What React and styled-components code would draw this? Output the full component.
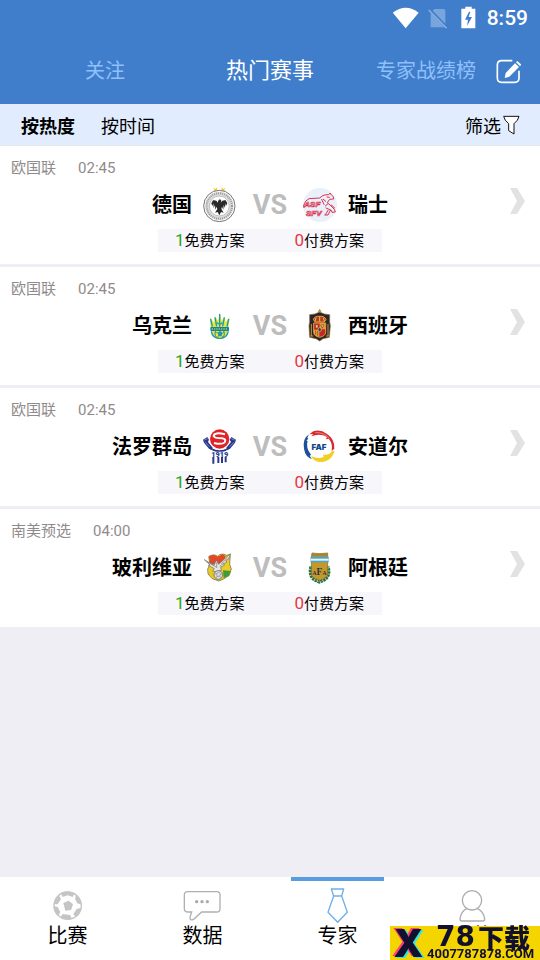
import React from "react";
import styled, { createGlobalStyle } from "styled-components";


const matches = [
  { league: "欧国联", time: "02:45", home: "德国", away: "瑞士", homeCrest: Germany, awayCrest: Switzerland, free: 1, paid: 0 },
  { league: "欧国联", time: "02:45", home: "乌克兰", away: "西班牙", homeCrest: Ukraine, awayCrest: Spain, free: 1, paid: 0 },
  { league: "欧国联", time: "02:45", home: "法罗群岛", away: "安道尔", homeCrest: Faroe, awayCrest: Andorra, free: 1, paid: 0 },
  { league: "南美预选", time: "04:00", home: "玻利维亚", away: "阿根廷", homeCrest: Bolivia, awayCrest: Argentina, free: 1, paid: 0 },
];

const tabs = [
  { label: "比赛", icon: BallIcon },
  { label: "数据", icon: ChatIcon },
  { label: "专家", icon: TieIcon, active: true },
  { label: "我的", icon: PersonIcon },
];


export default function App() {
  return (
    <Page>
      <GlobalStyle />

      <Header>
        <StatusBar>
          <StatusIcons />
          <Clock>8:59</Clock>
        </StatusBar>
        <TopTabs>
          <TopTab type="button">关注</TopTab>
          <TopTab type="button" $active>热门赛事</TopTab>
          <TopRight>
            <TopTab type="button">专家战绩榜</TopTab>
            <IconButton type="button" aria-label="发布">
              <EditIcon />
            </IconButton>
          </TopRight>
        </TopTabs>
      </Header>

      <SortBar>
        <SortButton type="button" $active>按热度</SortButton>
        <SortButton type="button">按时间</SortButton>
        <FilterButton type="button">
          筛选
          <FunnelIcon />
        </FilterButton>
      </SortBar>

      <MatchList>
        {matches.map((match) => (
          <MatchCard key={match.home} {...match} />
        ))}
      </MatchList>

      <TabBar>
        {tabs.map(({ label, icon: Icon, active }) => (
          <TabLink key={label} href="#" $active={active}>
            <Icon />
            {label}
          </TabLink>
        ))}
      </TabBar>

      <Watermark />
    </Page>
  );
}


function MatchCard(props) {
  const HomeCrest = props.homeCrest;
  const AwayCrest = props.awayCrest;

  return (
    <Card href="#">
      <Meta>
        <span>{props.league}</span>
        <span>{props.time}</span>
      </Meta>
      <Teams>
        <HomeName>{props.home}</HomeName>
        <HomeCrest />
        <Versus>VS</Versus>
        <AwayCrest />
        <AwaySide>
          <TeamName>{props.away}</TeamName>
          <Chevron viewBox="0 0 15 26" aria-hidden="true">
            <path d="M0 0H7L15 13L7 26H0L7 13Z" fill="#e2e2e2" />
          </Chevron>
        </AwaySide>
      </Teams>
      <Plans>
        <Plan><Count $color="#2aa515">{props.free}</Count>免费方案</Plan>
        <Plan><Count $color="#e5383b">{props.paid}</Count>付费方案</Plan>
      </Plans>
    </Card>
  );
}


function StatusIcons() {
  return (
    <svg width="84" height="24" viewBox="98 16 252 72" aria-hidden="true">
      <path d="M97 36Q136 6 175 36L136 83Z" fill="#fff" />
      <path d="M222 25H249Q255 25 255 31V80H211V37Z" fill="#79a5dd" />
      <path d="M206 25L262 83" stroke="#407ecb" strokeWidth="9" />
      <path d="M205 28L259 83" stroke="#8cb2e2" strokeWidth="4" />
      <path d="M315 18H334V24H345V83H303V24H315Z" fill="#fff" />
      <path d="M326 33L314 57H323L320 76L335 49H325L330 33Z" fill="#407ecb" />
    </svg>
  );
}

function EditIcon() {
  return (
    <svg width="25" height="25" viewBox="409 171 75 75" aria-hidden="true">
      <path d="M458 176H426Q413 176 413 189V228Q413 241 426 241H465Q478 241 478 228V206" fill="none" stroke="#fff" strokeWidth="5" />
      <path d="M435 228L438 213L466 184L478 195L449 224Z" fill="#fff" />
      <path d="M469 181L473 177L485 188L481 193Z" fill="#fff" />
    </svg>
  );
}

function FunnelIcon() {
  return (
    <svg width="17" height="20" viewBox="429 343 51 60" aria-hidden="true">
      <path d="M431 347H477Q475 359 462 369V400L446 390V369Q433 359 431 347Z" fill="#fff" stroke="#111" strokeWidth="3" strokeLinejoin="round" />
    </svg>
  );
}

function BallIcon() {
  return (
    <svg width="40" height="36" viewBox="142 54 120 108" aria-hidden="true">
      <circle cx="201" cy="107" r="41" fill="#fff" stroke="#c5c5c5" strokeWidth="4" />
      <g fill="#c5c5c5">
        <path d="M188 99L204 92L217 103L211 120L194 122Z" />
        <path d="M180 69Q201 60 222 70L216 81L201 76L186 81Z" />
        <path d="M226 74Q241 86 243 104L230 100L223 86Z" />
        <path d="M242 113Q238 133 225 142L218 132L228 117Z" />
        <path d="M214 146Q196 152 179 142L186 132L208 135Z" />
        <path d="M173 139Q159 126 159 108L171 111L179 126Z" />
        <path d="M160 103Q162 85 174 74L181 87L171 103Z" />
      </g>
    </svg>
  );
}

function ChatIcon() {
  return (
    <svg width="40" height="36" viewBox="548 54 120 108" aria-hidden="true">
      <path d="M563 65H649Q659 65 659 75V116Q659 126 649 126H604L580 148Q568 153 569 142L574 126H563Q552 126 552 116V75Q552 65 563 65Z" fill="none" stroke="#b0b0b4" strokeWidth="4" />
      <g fill="#aaaaae">
        <circle cx="589" cy="95" r="5" />
        <circle cx="605" cy="95" r="5" />
        <circle cx="621" cy="95" r="5" />
      </g>
    </svg>
  );
}

function TieIcon() {
  return (
    <svg width="40" height="36" viewBox="143 54 120 108" aria-hidden="true">
      <path d="M183 57H220L214 78H190ZM190 78L173 127L202 157L231 127L214 78" fill="none" stroke="#6fb0e8" strokeWidth="4" strokeLinejoin="round" />
    </svg>
  );
}

function PersonIcon() {
  return (
    <svg width="40" height="36" viewBox="548 54 120 108" aria-hidden="true">
      <circle cx="605" cy="91" r="29" fill="none" stroke="#acacb0" strokeWidth="4" />
      <path d="M589 116Q572 124 569 147Q569 153 575 153H637Q643 153 643 147Q640 124 621 116" fill="none" stroke="#acacb0" strokeWidth="4" />
    </svg>
  );
}


function Germany() {
  return (
    <Crest viewBox="36 21 108 108" aria-hidden="true">
      <g fill="#f5c927">
        <path d="M70 23L76 27L82 22L81 30L84 36L76 33L70 35L73 29Z" />
        <path d="M106 23L100 27L94 22L95 30L92 36L100 33L106 35L103 29Z" />
      </g>
      <circle cx="88" cy="78" r="47" fill="#fff" stroke="#777" strokeWidth="3" />
      <circle cx="88" cy="78" r="37" fill="none" stroke="#dcdcdc" strokeWidth="11" />
      <circle cx="88" cy="78" r="38" fill="none" stroke="#999" strokeWidth="6" strokeDasharray="3 3" />
      <circle cx="88" cy="78" r="30" fill="#fff" stroke="#999" strokeWidth="2" />
      <path d="M84 63L90 57L94 62L92 68Q97 59 107 61L112 70L108 78L106 70L105 84L101 75L100 89L96 80L94 87L101 98L93 96L88 106L83 96L75 98L82 87L80 80L76 89L75 75L71 84L70 70L67 78L64 70L69 61Q79 59 84 68Z" fill="#292929" />
    </Crest>
  );
}

function Switzerland() {
  return (
    <Crest viewBox="336 21 108 108" aria-hidden="true">
      <circle cx="390" cy="75" r="51" fill="#e9f0f8" />
      <g fill="none" stroke="#dc3150" strokeWidth="3" strokeLinecap="round" strokeLinejoin="round">
        <path d="M341 76Q346 60 357 56L389 54L398 47Q408 43 416 44L420 39L424 45L430 50L431 57L419 58L412 68Q424 78 433 88L436 96L426 97L424 91L408 84" />
        <path d="M414 71L406 78M400 58L407 64M424 75L434 84M414 91L407 103M421 91L414 105L404 105M341 76L342 83M411 51L418 52M395 58L402 73" />
      </g>
      <g fill="#e9f0f8" stroke="#dc3150" strokeWidth="2" fontFamily="Liberation Sans, sans-serif" fontSize="24" fontWeight="700" fontStyle="italic">
        <text x="343" y="80">ASF</text>
        <text x="348" y="107">SFV</text>
      </g>
    </Crest>
  );
}

function Ukraine() {
  return (
    <Crest viewBox="36 24 108 108" aria-hidden="true">
      <path d="M59 51L72 68L75 49L84 62L89 37L95 62L105 49L106 68L119 51L115 91Q115 117 89 117Q64 117 63 91Z" fill="#e6e62b" />
      <g fill="none" stroke="#159bc0" strokeWidth="4">
        <path d="M62 57L67 80M75 52L80 79M89 42V80M103 52L98 79M116 57L111 80M81 68Q89 77 97 68" />
        <path d="M64 94Q67 114 89 115Q111 114 115 94" />
      </g>
      <circle cx="89" cy="101" r="14" fill="#f0e93b" stroke="#2389a4" strokeWidth="3" />
      <path d="M84 98L90 94L97 99L94 107L86 108ZM76 98L84 98M97 99L103 96M86 108L82 113M94 107L99 112" fill="#1b96bd" stroke="#2389a4" strokeWidth="2" />
      <rect x="61" y="81" width="56" height="12" rx="2" fill="#1283b1" />
      <path d="M65 87H113" stroke="#a9c953" strokeWidth="4" strokeDasharray="4 3" />
    </Crest>
  );
}

function Spain() {
  return (
    <Crest viewBox="336 24 108 108" aria-hidden="true">
      <path d="M359 44Q375 44 389 36Q402 44 419 44V65L421 77L418 112L399 116L389 123L378 116L359 112L357 77L359 65Z" fill="#25252c" stroke="#8b6b35" strokeWidth="2" />
      <path d="M385 37L384 32L387 30L389 26L391 30L394 32L393 37Z" fill="#c19336" />
      <path d="M370 58Q375 47 389 49Q403 47 408 58L403 66H375Z" fill="#b93931" stroke="#e2a734" strokeWidth="3" />
      <path d="M378 53L375 64M389 49V65M400 53L403 64" stroke="#eab944" strokeWidth="3" />
      <path d="M371 69H407V97Q407 108 389 112Q371 108 371 97Z" fill="#c82529" stroke="#e1a130" strokeWidth="3" />
      <path d="M389 69H406V88H389ZM372 89H388V110Q373 107 372 98Z" fill="#e0a434" />
      <path d="M377 74H384V84H377ZM392 75L401 74L397 85ZM377 92V104M383 92V107" fill="#f0d98d" stroke="#8f302a" strokeWidth="2" />
      <ellipse cx="389" cy="89" rx="5" ry="6" fill="#343c6d" stroke="#e9c55b" strokeWidth="2" />
      <path d="M364 72V108M414 72V108M360 108H370M408 108H418" stroke="#cc9642" strokeWidth="3" />
    </Crest>
  );
}

function Faroe() {
  return (
    <Crest viewBox="36 27 108 108" aria-hidden="true">
      <g fill="#29398e">
        <path d="M39 59L52 51L57 59L54 66L68 83L65 91L57 86L42 68Z" />
        <path d="M138 59L124 51L119 59L123 66L109 83L112 91L120 86L135 68Z" />
      </g>
      <path d="M43 60L53 56M46 67L58 80M134 60L124 56M131 67L119 80" stroke="#9aa6d2" strokeWidth="2" />
      <circle cx="89" cy="57" r="29" fill="#e22227" />
      <path d="M105 43Q73 35 71 48Q73 55 96 55Q110 57 104 67Q96 75 72 69" fill="none" stroke="#fff" strokeWidth="6" />
      <path d="M64 84Q89 98 113 84L109 92Q89 99 68 92Z" fill="#29398e" />
      <text x="89" y="112" fill="#29398e" fontFamily="Roboto, sans-serif" fontWeight="900" fontSize="22" textAnchor="middle">1919</text>
      <path d="M67 111H73V131H67ZM82 111H88V129H82ZM93 111H99V129H93ZM104 111H110V127H104Z" fill="#29398e" />
    </Crest>
  );
}

function Andorra() {
  return (
    <Crest viewBox="336 27 108 108" aria-hidden="true">
      <path d="M357 43Q337 56 342 86Q346 111 366 117Q350 99 351 81L346 73Q347 61 355 57L352 53Z" fill="#1c5199" />
      <path d="M370 34Q391 27 411 42Q435 58 433 86L425 93Q429 69 416 56L408 58L411 51Q390 38 364 49L370 42L358 43Z" fill="#d9292f" />
      <path d="M434 94Q424 123 397 126Q373 128 363 108Q384 119 401 111L399 104Q416 107 426 93Z" fill="#f2cf27" />
      <path d="M349 62Q342 85 360 107" fill="none" stroke="#1c5199" strokeWidth="8" />
      <path d="M376 38Q400 36 418 55" fill="none" stroke="#f3b0b0" strokeWidth="2" />
      <text x="387" y="90" fill="#174989" fontFamily="Inter, sans-serif" fontWeight="900" fontSize="24" textAnchor="middle">FAF</text>
    </Crest>
  );
}

function Bolivia() {
  return (
    <Crest viewBox="36 30 108 108" aria-hidden="true">
      <path d="M56 50Q71 40 83 49Q94 37 110 46L121 43L119 73L124 87L118 106L101 117L86 123L67 116L54 102L53 87L60 72Z" fill="#edcc28" stroke="#695c2c" strokeWidth="2" />
      <path d="M57 48L71 44L83 50L98 43L107 49L97 73H60Z" fill="#e14926" />
      <path d="M53 91L72 89L79 111L64 112Z" fill="#e6c62a" />
      <path d="M99 91L122 93L116 108L101 114Z" fill="#409a35" />
      <path d="M43 59L72 76L79 60L86 73L121 41L116 57L107 62L111 66L101 71L103 76L92 81L94 91L78 95L68 93L73 86L55 76L60 75Z" fill="#e4e8e4" stroke="#656b68" strokeWidth="2" />
      <path d="M52 66L78 81M94 72L113 53M89 79L102 69M80 67V84" stroke="#777" strokeWidth="2" />
      <circle cx="85" cy="105" r="13" fill="#ddd" stroke="#555" strokeWidth="2" />
      <path d="M80 100L86 97L92 102L89 109L81 109ZM74 103L80 100M81 109L79 115M89 109L94 113M92 102L97 101" fill="none" stroke="#888" strokeWidth="2" />
    </Crest>
  );
}

function Argentina() {
  return (
    <Crest viewBox="336 30 108 108" aria-hidden="true">
      <path d="M363 80Q356 110 376 121L388 126L400 121Q422 110 414 80" fill="none" stroke="#266c3b" strokeWidth="10" strokeDasharray="7 2" />
      <path d="M363 80Q356 110 376 121L388 126L400 121Q422 110 414 80" fill="none" stroke="#6aa54f" strokeWidth="3" strokeDasharray="3 5" />
      <path d="M366 39Q388 43 413 39V107L400 117L389 121L377 117L364 107V51Z" fill="#c39a2a" stroke="#6b6637" strokeWidth="2" />
      <path d="M366 41H413V49H366Z" fill="#a68632" />
      <path d="M362 50H416V67H362Z" fill="#4aa4ce" />
      <path d="M362 56H416V62H362Z" fill="#f0f4ee" />
      <text x="388" y="105" fill="#2c304e" fontFamily="Liberation Serif, serif" fontWeight="700" fontSize="18" textAnchor="middle">
        A<tspan fontSize="28">F</tspan>A
      </text>
    </Crest>
  );
}


function Watermark() {
  return (
    <Mark>
      <MarkLogo>X</MarkLogo>
      <MarkText>
        <MarkName><b>78</b>下载</MarkName>
        <MarkSite>4007787878.COM</MarkSite>
      </MarkText>
    </Mark>
  );
}


const GlobalStyle = createGlobalStyle`
  * { box-sizing: border-box; }

  body {
    margin: 0;
    background: #efeef4;
    color: #000;
    font-family: Roboto, "Noto Sans CJK SC", sans-serif;
  }

  button {
    padding: 0;
    border: 0;
    background: none;
    color: inherit;
    font: inherit;
    white-space: nowrap;
  }

  a { color: inherit; text-decoration: none; }
  svg { display: block; flex: none; }
`;

const Page = styled.div`
  display: flex;
  flex-direction: column;
  min-height: 100vh;
`;

const Header = styled.header`
  background: #407ecb;
  color: #fff;
`;

const StatusBar = styled.div`
  display: flex;
  align-items: center;
  justify-content: flex-end;
  gap: 10px;
  height: 36px;
  padding-right: 12px;
`;

const Clock = styled.span`
  font-size: 21px;
  font-weight: 500;
`;

const TopTabs = styled.nav`
  display: grid;
  grid-template-columns: 7fr 4fr 7fr;
  align-items: center;
  height: 68px;
  padding-top: 2px;
`;

const TopTab = styled.button`
  color: ${(props) => (props.$active ? "#fff" : "#8fc0fb")};
  font-size: ${(props) => (props.$active ? "22px" : "20px")};
  line-height: 32px;
`;

const TopRight = styled.div`
  display: flex;
  align-items: center;
  justify-content: flex-end;
  gap: 20px;
  padding-right: 19px;
`;

const IconButton = styled.button`
  display: flex;
`;

const SortBar = styled.div`
  display: flex;
  align-items: center;
  gap: 26px;
  height: 42px;
  padding: 0 20px 0 21px;
  background: #e1edfe;
  border-bottom: 1px solid #e5e5ea;
  font-size: 18px;
`;

const SortButton = styled.button`
  font-weight: ${(props) => (props.$active ? 700 : 400)};
`;

const FilterButton = styled.button`
  display: flex;
  align-items: center;
  gap: 2px;
  margin-left: auto;
`;

const MatchList = styled.main`
  display: flex;
  flex: 1;
  flex-direction: column;
  gap: 3px;
`;

const Card = styled.a`
  display: flex;
  flex-direction: column;
  padding: 11px 0 12px;
  background: #fff;
`;

const Meta = styled.div`
  display: flex;
  gap: 22px;
  padding-left: 11px;
  color: #8f8b8b;
  font-size: 15px;
  line-height: 22px;
`;

const Teams = styled.div`
  display: grid;
  grid-template-columns: 1fr 36px 44px 36px 1fr;
  align-items: center;
  column-gap: 10px;
  height: 36px;
  margin: 8px 0 6px;
`;

const TeamName = styled.span`
  font-size: 20px;
  font-weight: 700;
  line-height: 34px;
`;

const HomeName = styled(TeamName)`
  text-align: right;
`;

const AwaySide = styled.div`
  display: flex;
  align-items: flex-start;
  justify-content: space-between;
  padding-right: 15px;
`;

const Crest = styled.svg`
  width: 36px;
  height: 36px;
`;

const Versus = styled.span`
  color: #bdbdbd;
  font-size: 27px;
  font-weight: 700;
  line-height: 36px;
  text-align: center;
`;

const Chevron = styled.svg`
  width: 15px;
  height: 26px;
`;

const Plans = styled.div`
  display: flex;
  align-items: center;
  align-self: center;
  justify-content: space-between;
  width: 224px;
  height: 23px;
  padding: 0 18px 0 17px;
  background: #f7f7fb;
`;

const Plan = styled.span`
  font-size: 15px;
  line-height: 23px;
`;

const Count = styled.span`
  color: ${(props) => props.$color};
  font-size: 17px;
`;

const TabBar = styled.nav`
  position: sticky;
  bottom: 0;
  display: flex;
  background: #fff;
`;

const TabLink = styled.a`
  display: flex;
  flex: 1;
  flex-direction: column;
  align-items: center;
  padding-bottom: 12px;
  font-size: 20px;
  line-height: 24px;

  &::before {
    content: "";
    width: 69%;
    height: 4px;
    margin-bottom: 7px;
    background: ${(props) => (props.$active ? "#579ddf" : "transparent")};
  }
`;

const Mark = styled.div`
  position: fixed;
  right: 0;
  bottom: 0;
  display: flex;
  width: 150px;
  height: 34px;
  background: #f4d500;
  color: #11112e;
`;

const MarkLogo = styled.span`
  width: 37px;
  font-family: Inter, sans-serif;
  font-size: 38px;
  font-weight: 900;
  line-height: 34px;
  text-align: center;
  text-shadow: -2px -1px #ff3d7f, 2px 1px #33e6e8;
`;

const MarkText = styled.div`
  display: flex;
  flex-direction: column;
`;

const MarkName = styled.span`
  display: flex;
  gap: 3px;
  padding-left: 9px;
  font-family: "Noto Sans CJK SC", sans-serif;
  font-size: 26px;
  font-weight: 900;
  line-height: 22px;
  white-space: nowrap;

  b {
    font-family: "DejaVu Sans", sans-serif;
    font-size: 28px;
    font-weight: 700;
  }
`;

const MarkSite = styled.span`
  font-family: Roboto, sans-serif;
  font-size: 13px;
  font-weight: 700;
  line-height: 12px;
`;
